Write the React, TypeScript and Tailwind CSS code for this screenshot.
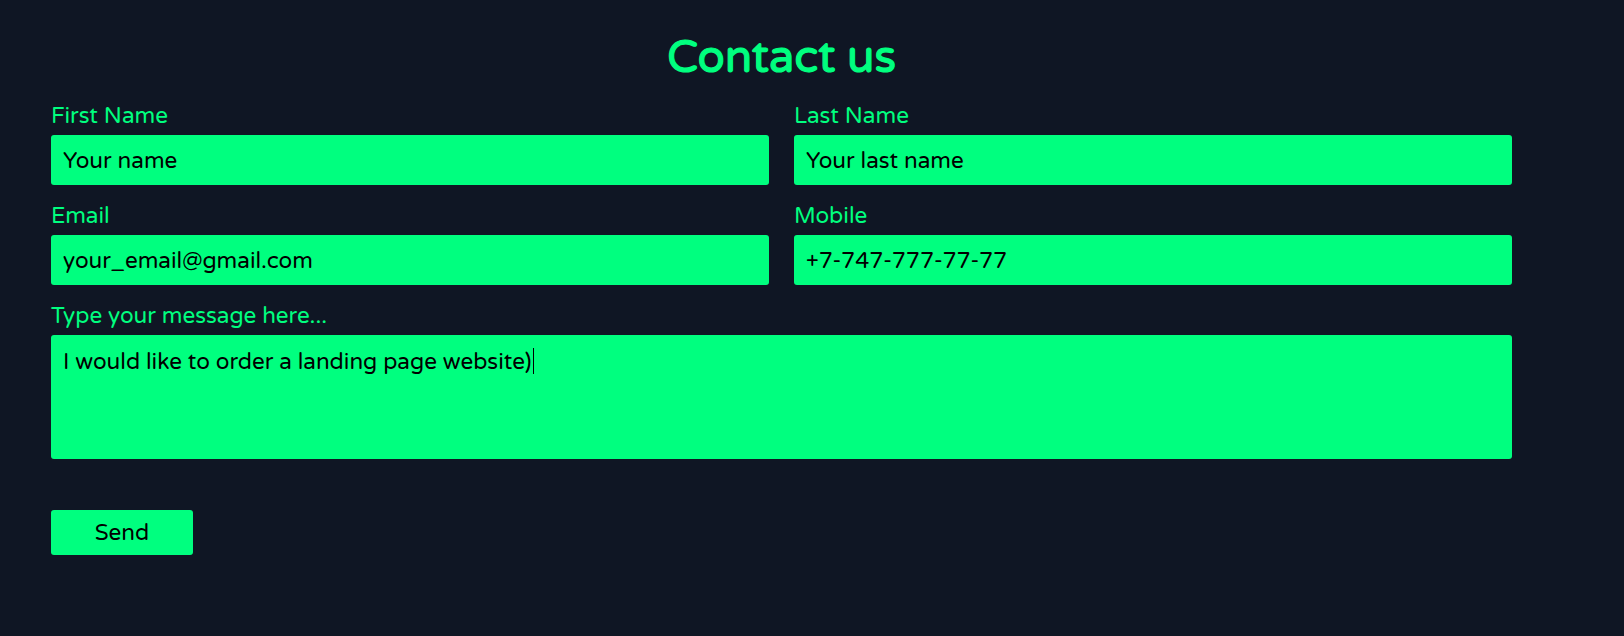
const fieldFont = "font-['Varela_Round','DejaVu_Sans',sans-serif] text-[22.5px]";

const Field = ({ label, placeholder }: { label: string; placeholder: string }) => {
  return (
    <label className="flex flex-col">
      <span className="leading-[26px] text-[#00ff7f]">{label}</span>
      <input
        type="text"
        placeholder={placeholder}
        className="mt-[6px] h-[50px] rounded-[3px] bg-[#00ff7f] px-3 text-black outline-none placeholder:text-black"
      />
    </label>
  );
};

export default function App() {
  return (
    <div className={`min-h-screen bg-[#0f1624] pt-[34px] pl-[51px] ${fieldFont}`}>
      <form className="flex w-[1461px] flex-col" onSubmit={(e) => e.preventDefault()}>
        <h1 className="text-center text-[45px] leading-[48px] text-[#00ff7f] [-webkit-text-stroke:1.2px_#00ff7f]">
          Contact us
        </h1>

        <div className="mt-[21px] grid grid-cols-2 gap-x-[25px] gap-y-[18px]">
          <Field label="First Name" placeholder="Your name" />
          <Field label="Last Name" placeholder="Your last name" />
          <Field label="Email" placeholder="your_email@gmail.com" />
          <Field label="Mobile" placeholder="+7-747-777-77-77" />
        </div>

        <label className="mt-[18px] flex flex-col">
          <span className="leading-[26px] text-[#00ff7f]">Type your message here...</span>
          <div className="relative mt-[6px]">
            <textarea
              defaultValue="I would like to order a landing page website)"
              className="block h-[124px] w-full resize-none rounded-[3px] bg-[#00ff7f] px-3 py-[10px] leading-normal text-black outline-none"
            />
            {/* caret as it shows in the screenshot */}
            <span className="pointer-events-none absolute top-[13px] left-[482px] h-[26px] w-px bg-black" />
          </div>
        </label>

        <div className="mt-[51px]">
          <button
            type="submit"
            className="h-[45px] w-[142px] rounded-[3px] bg-[#00ff7f] text-black"
          >
            Send
          </button>
        </div>
      </form>
    </div>
  );
}
